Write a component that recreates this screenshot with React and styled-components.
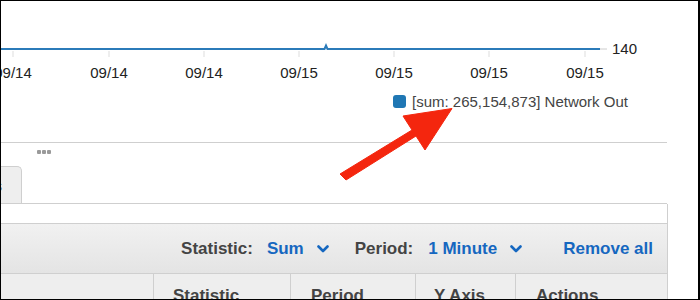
import React from 'react'
import styled, { createGlobalStyle } from 'styled-components'

const Global = createGlobalStyle`
  body {
    margin: 0;
    font-family: "Liberation Sans", Arial, sans-serif;
    background: #fff;
  }
`;

const Frame = styled.div`
  position: relative;
  width: 700px;
  height: 300px;
  overflow: hidden;
  background: #fff;
  &::after {
    content: '';
    position: absolute;
    inset: 0;
    border: 1px solid #000;
    border-right-width: 2px;
    pointer-events: none;
  }
`;

const Chart = styled.svg`
  display: block;
  width: 667px;
  height: 86px;
  font-family: "Liberation Sans", Arial, sans-serif;
`;

const LegendRow = styled.div`
  display: flex;
  align-items: center;
  height: 30px;
  padding-left: 393px;
  gap: 6px;
`;

const Swatch = styled.span`
  width: 13px;
  height: 13px;
  border-radius: 3px;
  background: #1f77b4;
`;

const LegendText = styled.span`
  font-size: 15px;
  color: #444;
`;

const Divider = styled.div`
  width: 667px;
  margin-top: 26px;
  border-top: 1px solid #cfcfcf;
`;

const Dots = styled.div`
  display: flex;
  gap: 1px;
  margin: 7px 0 0 37px;
`;

const Dot = styled.span`
  width: 4px;
  height: 4px;
  border-radius: 1px;
  background: #9a9a9a;
`;

const TabStrip = styled.div`
  display: flex;
  width: 667px;
  margin-top: 12px;
  border-bottom: 1px solid #cfcfcf;
`;

const Tab = styled.div`
  display: flex;
  align-items: center;
  justify-content: flex-end;
  box-sizing: border-box;
  width: 150px;
  height: 37px;
  margin-left: -128px;
  padding-right: 19px;
  background: #eee;
  border: 1px solid #cfcfcf;
  border-bottom: none;
  border-top-right-radius: 5px;
  font-size: 15px;
  color: #444;
  white-space: nowrap;
`;

const Panel = styled.div`
  box-sizing: border-box;
  width: 668px;
  padding-top: 19px;
  border-right: 1px solid #cfcfcf;
`;

const Table = styled.div`
  border-top: 1px solid #cfcfcf;
`;

const Toolbar = styled.div`
  display: flex;
  align-items: center;
  justify-content: flex-end;
  height: 49px;
  padding-right: 14px;
  background: linear-gradient(#f1f1f1, #e4e4e4);
  border-bottom: 1px solid #cfcfcf;
  font-size: 17px;
  font-weight: bold;
`;

const Field = styled.div`
  display: flex;
  align-items: center;
  margin-left: ${p => p.$gap}px;
`;

const Label = styled.span`
  color: #444;
  margin-right: ${p => p.$space}px;
`;

const Value = styled.span`
  color: #1567c0;
  margin-right: 13px;
`;

const Link = styled.span`
  color: #1567c0;
  margin-left: 41px;
`;

const HeaderRow = styled.div`
  display: grid;
  grid-template-columns: 154px 137px 125px 100px 1fr;
  height: 40px;
  background: #eee;
`;

const HeaderCell = styled.div`
  box-sizing: border-box;
  padding: 12px 0 0 ${p => p.$pad}px;
  border-right: 1px solid #cfcfcf;
  font-size: 17px;
  font-weight: bold;
  color: #444;
  &:last-child { border-right: none; }
`;

const ArrowLayer = styled.svg`
  position: absolute;
  left: 0;
  top: 0;
  width: 700px;
  height: 300px;
  pointer-events: none;
`;

const Chevron = () => (
  <svg width="12" height="8" viewBox="0 0 12 8">
    <polyline points="1.5,1.5 6,6 10.5,1.5" fill="none" stroke="#1567c0" strokeWidth="2.6" strokeLinecap="round" strokeLinejoin="round" />
  </svg>
)

const ticks = [13, 109, 204, 299, 394, 489, 585]
const labels = ['09/14', '09/14', '09/14', '09/15', '09/15', '09/15', '09/15']

const App = () => {
  return (
    <Frame>
      <Global />
      <Chart viewBox="0 0 667 86">
        {ticks.map(x => (
          <line key={x} x1={x} y1="51" x2={x} y2="57" stroke="#ddd" strokeWidth="1" />
        ))}
        <path d="M0 49 H324.5 L326 45.5 L327.5 49 H600" fill="none" stroke="#2b7bb9" strokeWidth="2" />
        <line x1="600" y1="49" x2="607" y2="49" stroke="#ccc" strokeWidth="1" />
        <text x="612" y="54" fontSize="15" fill="#222">140</text>
        {ticks.map((x, i) => (
          <text key={x} x={x} y="78" fontSize="15" fill="#222" textAnchor="middle">{labels[i]}</text>
        ))}
      </Chart>

      <LegendRow>
        <Swatch />
        <LegendText>[sum: 265,154,873] Network Out</LegendText>
      </LegendRow>

      <Divider />
      <Dots><Dot /><Dot /><Dot /></Dots>

      <TabStrip>
        <Tab>Graphed metrics</Tab>
      </TabStrip>

      <Panel>
        <Table>
          <Toolbar>
            <Field $gap={0}>
              <Label $space={14}>Statistic:</Label>
              <Value>Sum</Value>
              <Chevron />
            </Field>
            <Field $gap={26}>
              <Label $space={15}>Period:</Label>
              <Value>1 Minute</Value>
              <Chevron />
            </Field>
            <Link>Remove all</Link>
          </Toolbar>
          <HeaderRow>
            <HeaderCell $pad={19}></HeaderCell>
            <HeaderCell $pad={19}>Statistic</HeaderCell>
            <HeaderCell $pad={20}>Period</HeaderCell>
            <HeaderCell $pad={18}>Y Axis</HeaderCell>
            <HeaderCell $pad={20}>Actions</HeaderCell>
          </HeaderRow>
        </Table>
      </Panel>

      <ArrowLayer viewBox="0 0 700 300">
        <polygon
          points="340,174 412,130 403,116 452,108.5 425,150 416,136 346,180"
          fill="#f4260e"
          stroke="#f4260e"
          strokeWidth="1"
          strokeLinejoin="round"
        />
      </ArrowLayer>
    </Frame>
  )
}

export default App
